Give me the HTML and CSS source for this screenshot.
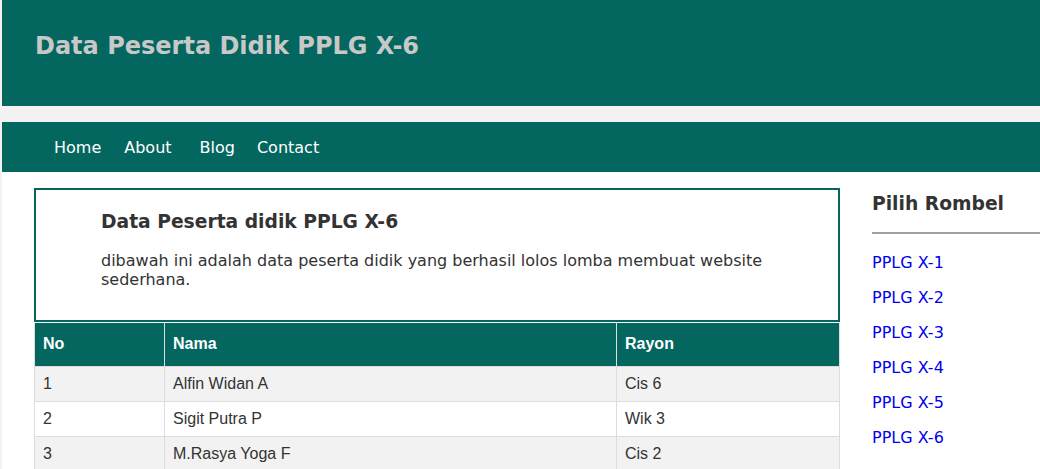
FILE: index.html
```html
<!DOCTYPE html>
<html>
<head>
<meta charset="utf-8">
<link rel="stylesheet" href="styles.css">
</head>
<body>
<div class="page">
  <header class="header">
    <h1 class="title">Data Peserta Didik PPLG X-6</h1>
  </header>
  <nav class="nav">
    <a href="#" class="nav-link">Home</a>
    <a href="#" class="nav-link">About</a>
    <a href="#" class="nav-link nav-blog">Blog</a>
    <a href="#" class="nav-link">Contact</a>
  </nav>
  <div class="main">
    <div class="content">
      <article class="intro">
        <h3 class="intro-title">Data Peserta didik PPLG X-6</h3>
        <p class="intro-text">dibawah ini adalah data peserta didik yang berhasil lolos lomba membuat website sederhana.</p>
      </article>
      <table class="data">
        <thead>
          <tr><th class="c-no">No</th><th class="c-nama">Nama</th><th class="c-rayon">Rayon</th></tr>
        </thead>
        <tbody>
          <tr><td>1</td><td>Alfin Widan A</td><td>Cis 6</td></tr>
          <tr><td>2</td><td>Sigit Putra P</td><td>Wik 3</td></tr>
          <tr><td>3</td><td>M.Rasya Yoga F</td><td>Cis 2</td></tr>
        </tbody>
      </table>
    </div>
    <aside class="sidebar">
      <h3 class="side-title">Pilih Rombel</h3>
      <hr class="side-rule">
      <ul class="side-list">
        <li><a href="#">PPLG X-1</a></li>
        <li><a href="#">PPLG X-2</a></li>
        <li><a href="#">PPLG X-3</a></li>
        <li><a href="#">PPLG X-4</a></li>
        <li><a href="#">PPLG X-5</a></li>
        <li><a href="#">PPLG X-6</a></li>
      </ul>
    </aside>
  </div>
</div>
</body>
</html>
```
FILE: styles.css
```css
html, body {
  margin: 0;
  padding: 0;
  background: #f2f2f2;
  font-family: "DejaVu Sans", Verdana, sans-serif;
  color: #333;
  overflow: hidden;
}
.page {
  padding-left: 2px;
}
.header {
  background: #03665f;
  height: 106px;
  padding: 0 33px;
  box-sizing: border-box;
  overflow: hidden;
}
.title {
  margin: 0;
  padding-top: 32px;
  font-size: 24px;
  font-weight: bold;
  color: #c8c8c8;
  line-height: 28px;
}
.nav {
  margin-top: 16px;
  background: #03665f;
  height: 50px;
  display: flex;
  align-items: center;
  padding-left: 52px;
}
.nav-link {
  color: #fff;
  text-decoration: none;
  font-size: 16px;
  margin-right: 23px;
}
.nav-blog {
  margin-left: 5px;
  margin-right: 22px;
}
.main {
  background: #fff;
  display: flex;
  padding: 16px 0 0 32px;
  height: 400px;
}
.content {
  width: 806px;
  flex: none;
}
.intro {
  border: 2px solid #03665f;
  padding: 0 65px 30px;
  height: 134px;
  box-sizing: border-box;
}
.intro-title {
  margin: 0;
  padding-top: 21px;
  font-size: 18.72px;
  font-weight: bold;
  color: #333;
}
.intro-text {
  margin: 19px 0 0;
  font-size: 16px;
  line-height: 19px;
  color: #333;
}
.data {
  width: 806px;
  border-collapse: collapse;
  font-family: "Liberation Sans", Arial, sans-serif;
  font-size: 16px;
  margin-top: 1px;
}
.data th {
  background: #03665f;
  color: #fff;
  text-align: left;
  font-weight: bold;
  height: 43px;
  padding: 0 8px;
  box-sizing: border-box;
  border: 1px solid #ddd;
  border-top: none;
}
.data td {
  height: 34px;
  padding: 0 8px;
  border: 1px solid #ddd;
  color: #333;
}
.data tbody tr:nth-child(odd) td {
  background: #f2f2f2;
}
.c-no { width: 130px; }
.c-nama { width: 452px; }
.sidebar {
  flex: 1;
  padding-left: 32px;
}
.side-title {
  margin: 0;
  padding-top: 5px;
  font-size: 18.72px;
  font-weight: bold;
  color: #333;
}
.side-rule {
  margin: 18px 0 0;
  border: none;
  border-top: 2px solid #a0a0a0;
}
.side-list {
  list-style: none;
  margin: 0;
  padding: 19px 0 0;
}
.side-list li {
  height: 35px;
  font-size: 16px;
}
.side-list a {
  color: #0000ee;
  text-decoration: none;
}
```
